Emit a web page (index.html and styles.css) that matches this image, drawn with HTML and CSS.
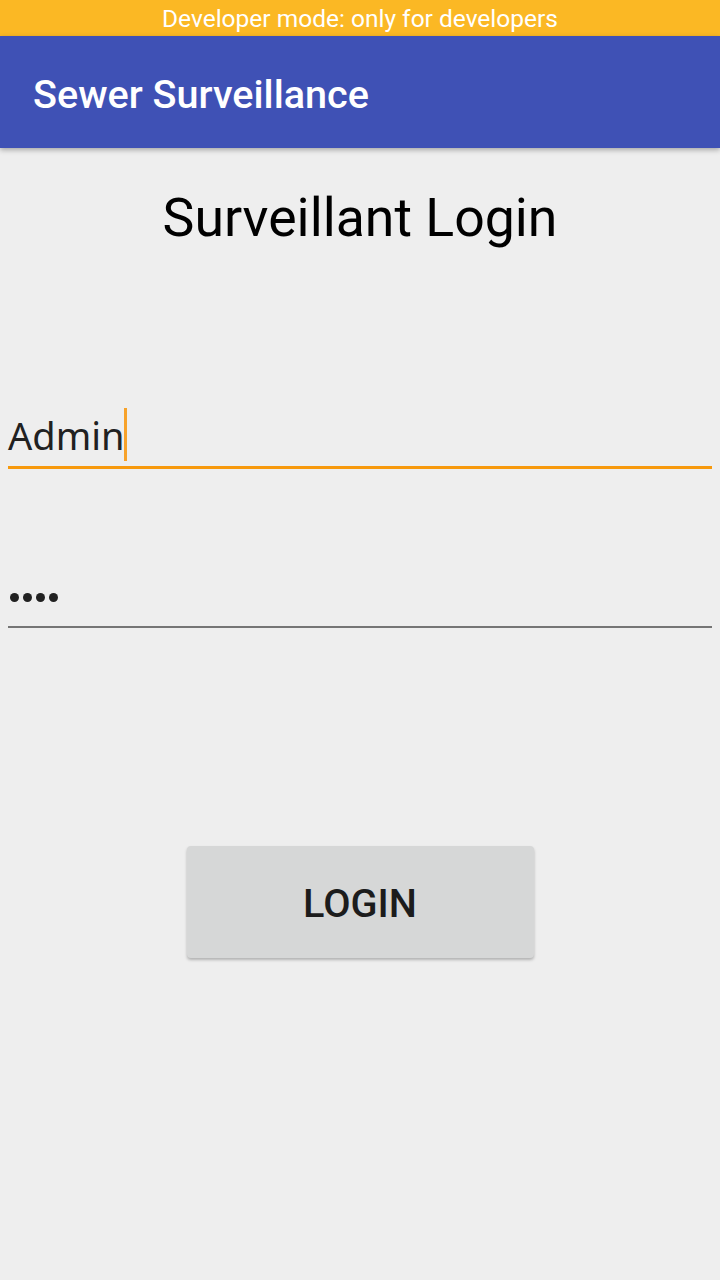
FILE: index.html
```html
<!DOCTYPE html>
<html>
<head>
<meta charset="utf-8">
<link rel="stylesheet" href="styles.css">
</head>
<body>
<div class="status">Developer mode: only for developers</div>
<header class="appbar"><span class="appbar-title">Sewer Surveillance</span></header>
<main class="content">
  <h1 class="heading">Surveillant Login</h1>
  <div class="field field-focused">
    <span class="field-text">Admin</span><span class="cursor"></span>
  </div>
  <div class="field field-password">
    <span class="dots"><i></i><i></i><i></i><i></i></span>
  </div>
  <div class="btn-row">
    <button class="btn">LOGIN</button>
  </div>
</main>
</body>
</html>
```
FILE: styles.css
```css
html, body {
  margin: 0;
  padding: 0;
}
body {
  width: 720px;
  height: 1280px;
  background: #eeeeee;
  font-family: Roboto, "Noto Sans", sans-serif;
  overflow: hidden;
}
.status {
  height: 36px;
  background: #fbb824;
  color: #ffffff;
  font-family: Roboto, sans-serif;
  font-size: 24.5px;
  line-height: 38px;
  text-align: center;
}
.appbar {
  height: 112px;
  box-sizing: border-box;
  padding: 4px 0 0 33px;
  background: #3f51b5;
  display: flex;
  align-items: center;
  box-shadow: 0 2px 5px rgba(0,0,0,0.3);
  position: relative;
}
.appbar-title {
  color: #ffffff;
  font-weight: 500;
  font-size: 39.6px;
}
.content {
  padding: 0 8px;
}
.heading {
  margin: 30px 0 0 0;
  text-align: center;
  font-weight: 400;
  font-size: 53.6px;
  line-height: 80px;
  color: #000000;
}
.field {
  display: flex;
  align-items: center;
  height: 60px;
}
.field-focused {
  margin-top: 148px;
  border-bottom: 3px solid #f7990c;
}
.field-text {
  font-family: "Noto Sans", "Open Sans", sans-serif;
  font-size: 38px;
  color: #212121;
  margin-top: -3px;
}
.cursor {
  width: 3px;
  height: 53px;
  background: #f7a22a;
  margin-top: -4px;
}
.field-password {
  margin-top: 97px;
  border-bottom: 2px solid #757575;
}
.dots {
  display: flex;
  gap: 4px;
  padding-left: 2px;
  margin-top: 2px;
}
.dots i {
  width: 9px;
  height: 9px;
  border-radius: 50%;
  background: #212121;
}
.btn-row {
  display: flex;
  justify-content: center;
  margin-top: 218px;
}
.btn {
  width: 347px;
  height: 112px;
  padding: 2px 0 0 0;
  border: none;
  border-radius: 4px;
  background: #d6d7d7;
  box-shadow: 0 2px 3px rgba(0,0,0,0.25);
  font-family: Roboto, sans-serif;
  font-weight: 500;
  font-size: 39.7px;
  color: #1c1c1c;
}
```
